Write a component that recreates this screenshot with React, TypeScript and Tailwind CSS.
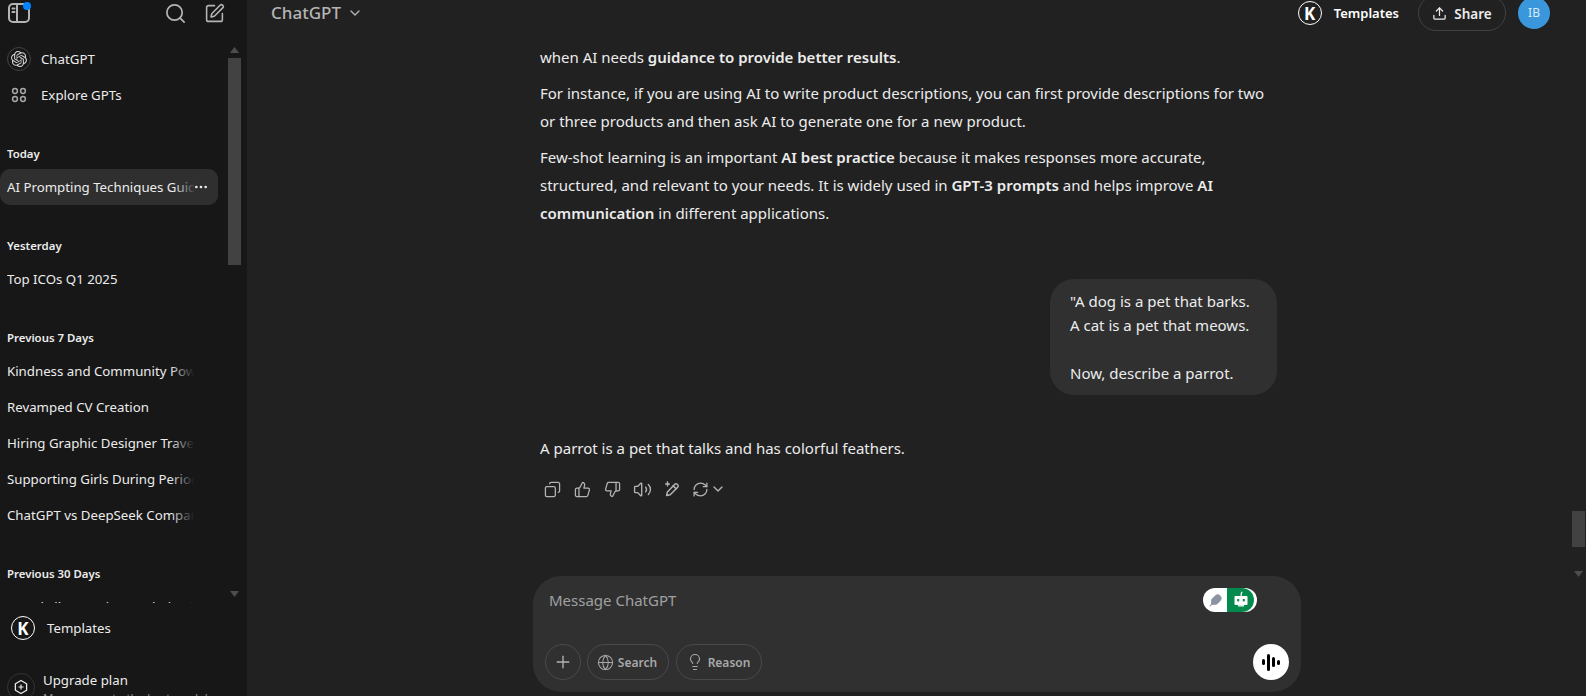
import { Search, SquarePen, Copy, ThumbsUp, ThumbsDown, Volume2, RefreshCw, ChevronDown, Plus, Globe, Lightbulb, Upload, Feather, Ellipsis } from "lucide-react";
import { SiOpenai } from "react-icons/si";

function KLogo({ cls }: { cls: string }) {
  return (
    <div className={`flex items-center justify-center rounded-full border-[1.5px] border-white text-white font-bold ${cls}`}>
      <span className="text-[17px] leading-none">K</span>
    </div>
  );
}

function Arrow({ up }: { up?: boolean }) {
  return (
    <svg width="9" height="6" viewBox="0 0 9 6" className="shrink-0 block">
      <polygon points={up ? "4.5,0 9,6 0,6" : "0,0 9,0 4.5,6"} fill="#4d4d4d" />
    </svg>
  );
}

function Row({ text, active }: { text: string; active?: boolean }) {
  return (
    <div className={`relative h-[36px] w-[218px] rounded-[10px] overflow-hidden flex items-center pl-[7px] text-[13.25px] whitespace-nowrap text-[#ececec] ${active ? "bg-[#2f2f2f]" : ""}`}>
      <span className="w-[187px] overflow-hidden block pt-[2px]">{text}</span>
      {!active && <div className="absolute left-[170px] top-0 h-full w-[48px] bg-gradient-to-r from-transparent to-[#171717] to-50%" />}
      {active && <div className="absolute left-[174px] top-0 h-full w-[44px] bg-gradient-to-r from-transparent to-[#2f2f2f] to-50%" />}
      {active && <Ellipsis className="absolute left-[193px] top-[10px] text-[#ececec]" size={16} strokeWidth={2} />}
    </div>
  );
}

function Label({ text, cls }: { text: string; cls: string }) {
  return <div className={`pl-[7px] h-[20px] flex items-center text-[11.4px] font-semibold text-[#ececec] ${cls}`}>{text}</div>;
}

function WandIcon() {
  return (
    <svg width="18" height="18" viewBox="0 0 18 18" fill="none" stroke="#b4b4b4" strokeWidth="1.5" strokeLinejoin="round" strokeLinecap="round">
      <path d="M11.8 4.3a1.7 1.7 0 0 1 2.4 0l.5.5a1.7 1.7 0 0 1 0 2.4L7.2 14.7 3.6 15.6l.8-3.7z" />
      <path d="M10.2 5.9l2.9 2.9" />
      <path d="M4.5 1.5l.7 1.8 1.8.7-1.8.7-.7 1.8-.7-1.8L2 4l1.8-.7z" fill="#b4b4b4" strokeWidth="0.6" />
    </svg>
  );
}

function RobotIcon() {
  return (
    <svg width="16" height="18" viewBox="0 0 16 18">
      <path d="M8.2 5V2.5L9.2 0.8" stroke="#fff" strokeWidth="1.2" fill="none" />
      <rect x="1.5" y="5" width="13" height="9" rx="1" fill="#fff" />
      <rect x="4.2" y="8" width="2" height="2.4" fill="#058a4e" />
      <rect x="9.8" y="8" width="2" height="2.4" fill="#058a4e" />
      <rect x="5" y="14" width="6" height="1.6" fill="#cfe8da" />
    </svg>
  );
}

function Sidebar() {
  return (
    <aside className="w-[247px] shrink-0 h-full bg-[#171717] flex flex-col overflow-hidden">
      <div className="h-[26px] shrink-0 flex items-center relative">
        <svg width="24" height="24" viewBox="0 0 24 24" fill="none" stroke="#b4b4b4" strokeWidth="2" className="ml-[7px]">
          <rect x="2" y="3" width="20" height="18" rx="4" />
          <path d="M10 3v18M5.5 7.5h2M5.5 11h2" strokeLinecap="round" />
        </svg>
        <div className="absolute left-[23px] top-[2px] w-[8px] h-[8px] rounded-full bg-[#0285ff]" />
        <Search className="ml-[133px] text-[#b4b4b4]" size={23} strokeWidth={1.8} />
        <SquarePen className="ml-[17px] text-[#b4b4b4]" size={21} strokeWidth={1.8} />
      </div>
      <div className="h-[577px] shrink-0 flex">
        <div className="w-[228px] shrink-0 overflow-hidden">
          <div className="mt-[15px] h-[36px] flex items-center pl-[7px] text-[13.25px] text-[#ececec]">
            <div className="w-[24px] h-[24px] rounded-full border border-[#424242] flex items-center justify-center mr-[10px]">
              <SiOpenai size={16} className="text-[#d4d4d4]" />
            </div>
            <span className="pt-[1px]">ChatGPT</span>
          </div>
          <div className="h-[36px] flex items-center pl-[7px] text-[13.25px] text-[#ececec]">
            <div className="w-[24px] h-[24px] flex items-center justify-center mr-[10px]">
              <svg width="16" height="16" viewBox="0 0 16 16" fill="none" stroke="#a8a8a8" strokeWidth="1.5">
                <circle cx="4" cy="4" r="2.4" /><circle cx="12" cy="4" r="2.4" /><circle cx="4" cy="12" r="2.4" /><circle cx="12" cy="12" r="2.4" />
              </svg>
            </div>
            <span className="pt-[2px]">Explore GPTs</span>
          </div>
          <Label text="Today" cls="mt-[31px] mb-[5px]" />
          <Row text="AI Prompting Techniques Guide" active />
          <Label text="Yesterday" cls="mt-[31px]" />
          <div className="mt-[5px]"><Row text="Top ICOs Q1 2025" /></div>
          <Label text="Previous 7 Days" cls="mt-[31px]" />
          <div className="mt-[5px]">
            <Row text="Kindness and Community Power" />
            <Row text="Revamped CV Creation" />
            <Row text="Hiring Graphic Designer Traveler" />
            <Row text="Supporting Girls During Periods" />
            <Row text="ChatGPT vs DeepSeek Comparison" />
          </div>
          <Label text="Previous 30 Days" cls="mt-[31px]" />
          <div className="mt-[5px]"><Row text="Travel Film Caption Optimization" /></div>
        </div>
        <div className="w-[13px] shrink-0 flex flex-col items-center">
          <div className="mt-[21px]"><Arrow up /></div>
          <div className="mt-[5px] w-[13px] h-[207px] bg-[#424242]" />
          <div className="mt-auto mb-[6px]"><Arrow /></div>
        </div>
      </div>
      <div className="h-[50px] shrink-0 flex items-center pl-[11px] text-[13.25px] text-[#ececec]">
        <KLogo cls="w-[24px] h-[24px] mr-[12px]" />
        <span className="pt-[2px]">Templates</span>
      </div>
      <div className="flex pl-[7px] pt-[17px]">
        <div className="w-[28px] h-[28px] rounded-full border border-[#333] flex items-center justify-center mt-[3px] mr-[8px] shrink-0">
          <svg width="16" height="16" viewBox="0 0 16 16" fill="none" stroke="#ececec" strokeWidth="1.3" strokeLinejoin="round">
            <path d="M8 1.5l5.6 3.2v6.6L8 14.5l-5.6-3.2V4.7z" />
            <path d="M8 5.5v5M5.5 8h5" strokeWidth="1.2" />
          </svg>
        </div>
        <div>
          <div className="text-[13.25px] leading-[20px] text-[#ececec]">Upgrade plan</div>
          <div className="text-[11.5px] leading-[16px] text-[#8e8e8e] whitespace-nowrap">More access to the best models</div>
        </div>
      </div>
    </aside>
  );
}

function Chip({ icon, text, cls }: { icon: React.ReactNode; text: string; cls: string }) {
  return (
    <div className={`h-[36px] rounded-full border border-[#4a4a4a] flex items-center justify-center gap-[4px] pr-[2px] text-[12px] font-semibold text-[#a8a8a8] ${cls}`}>
      {icon}
      <span className="pt-[2px]">{text}</span>
    </div>
  );
}

function Main() {
  const actionCls = "text-[#b4b4b4]";
  return (
    <main className="flex-1 h-full bg-[#212121] flex flex-col text-[#ececec] text-[15px] overflow-hidden">
      <div className="h-[26px] shrink-0 flex items-center pl-[24px] pr-[36px]">
        <span className="text-[17px] font-medium text-[#b4b4b4]">ChatGPT</span>
        <ChevronDown size={16} className="ml-[6px] text-[#b4b4b4]" />
        <KLogo cls="ml-auto w-[24px] h-[24px]" />
        <span className="ml-[12px] pt-[2px] text-[13px] font-semibold text-white">Templates</span>
        <div className="ml-[19px] h-[36px] w-[88px] rounded-full border border-[#424242] flex items-center justify-center gap-[7px] text-[13.5px] font-semibold text-[#ececec] shrink-0">
          <Upload size={15} />
          <span className="pt-[2px]">Share</span>
        </div>
        <div className="ml-[12px] w-[32px] h-[32px] rounded-full bg-[#3a97db] flex items-center justify-center text-[12px] text-[#d7e9f7] shrink-0">IB</div>
      </div>
      <div className="flex-1 flex min-h-0">
        <div className="flex-1 min-w-0 pl-[286px] flex flex-col">
          <div className="flex-1 w-[769px] pl-[7px] pr-[25px] leading-[28px] whitespace-nowrap overflow-hidden">
            <p className="mt-[17px]">when AI needs <b className="font-semibold">guidance to provide better results</b>.</p>
            <p className="mt-[8px]">For instance, if you are using AI to write product descriptions, you can first provide descriptions for two<br />or three products and then ask AI to generate one for a new product.</p>
            <p className="mt-[8px]">Few-shot learning is an important <b className="font-semibold">AI best practice</b> because it makes responses more accurate,<br />structured, and relevant to your needs. It is widely used in <b className="font-semibold">GPT-3 prompts</b> and helps improve <b className="font-semibold">AI</b><br /><b className="font-semibold">communication</b> in different applications.</p>
            <div className="flex justify-end mt-[52px]">
              <div className="w-[227px] h-[116px] rounded-[24px] bg-[#303030] pl-[20px] pt-[10px] leading-[24px]">
                "A dog is a pet that barks.<br />A cat is a pet that meows.<br /><br />Now, describe a parrot.
              </div>
            </div>
            <p className="mt-[39px]">A parrot is a pet that talks and has colorful feathers.</p>
            <div className="flex items-center mt-[13px] h-[28px]">
              <Copy size={17} strokeWidth={1.8} className={`${actionCls} -scale-x-100 ml-[4px]`} />
              <ThumbsUp size={17} strokeWidth={1.8} className={`${actionCls} ml-[13px]`} />
              <ThumbsDown size={17} strokeWidth={1.8} className={`${actionCls} ml-[13px]`} />
              <Volume2 size={19} strokeWidth={1.7} className={`${actionCls} ml-[12px]`} />
              <div className="ml-[11px]"><WandIcon /></div>
              <RefreshCw size={17} strokeWidth={1.8} className={`${actionCls} ml-[11px]`} />
              <ChevronDown size={16} strokeWidth={2} className={`${actionCls} ml-[1px]`} />
            </div>
          </div>
          <div className="shrink-0 w-[768px] h-[116px] rounded-[28px] bg-[#303030] mb-[4px] flex flex-col">
            <div className="flex items-start pl-[16px] pr-[44px] h-[68px]">
              <span className="mt-[13px] text-[#a0a0a0] text-[15px] leading-[22px]">Message ChatGPT</span>
              <div className="ml-auto mt-[12px] w-[54px] h-[24px] rounded-full overflow-hidden flex bg-white">
                <div className="w-[24px] h-full flex items-center justify-center">
                  <Feather size={13} className="text-[#8b93a3]" fill="#8b93a3" />
                </div>
                <div className="w-[27px] h-full bg-[#058a4e] rounded-r-full flex items-center justify-center">
                  <RobotIcon />
                </div>
              </div>
            </div>
            <div className="flex items-center pl-[12px] pr-[12px] gap-[6px]">
              <div className="w-[36px] h-[36px] rounded-full border border-[#4a4a4a] flex items-center justify-center">
                <Plus size={20} strokeWidth={1.6} className="text-[#b4b4b4]" />
              </div>
              <Chip cls="w-[82px]" text="Search" icon={<Globe size={17} strokeWidth={1.5} />} />
              <Chip cls="w-[86px] ml-[1px]" text="Reason" icon={<Lightbulb size={18} strokeWidth={1.5} />} />
              <div className="ml-auto w-[36px] h-[36px] rounded-full bg-white flex items-center justify-center gap-[2.5px]">
                <span className="w-[2.5px] h-[6px] rounded-full bg-black" />
                <span className="w-[2.5px] h-[17px] rounded-full bg-black" />
                <span className="w-[2.5px] h-[10px] rounded-full bg-black" />
                <span className="w-[2.5px] h-[5px] rounded-full bg-black" />
              </div>
            </div>
          </div>
        </div>
        <div className="w-[14px] shrink-0 mr-px flex flex-col items-center">
          <div className="mt-[485px] w-[13px] h-[36px] bg-[#424242]" />
          <div className="mt-[24px]"><Arrow /></div>
        </div>
      </div>
    </main>
  );
}

export default function App() {
  return (
    <div className="w-[1586px] h-[696px] overflow-hidden flex font-['Noto_Sans',sans-serif]">
      <Sidebar />
      <Main />
    </div>
  );
}
